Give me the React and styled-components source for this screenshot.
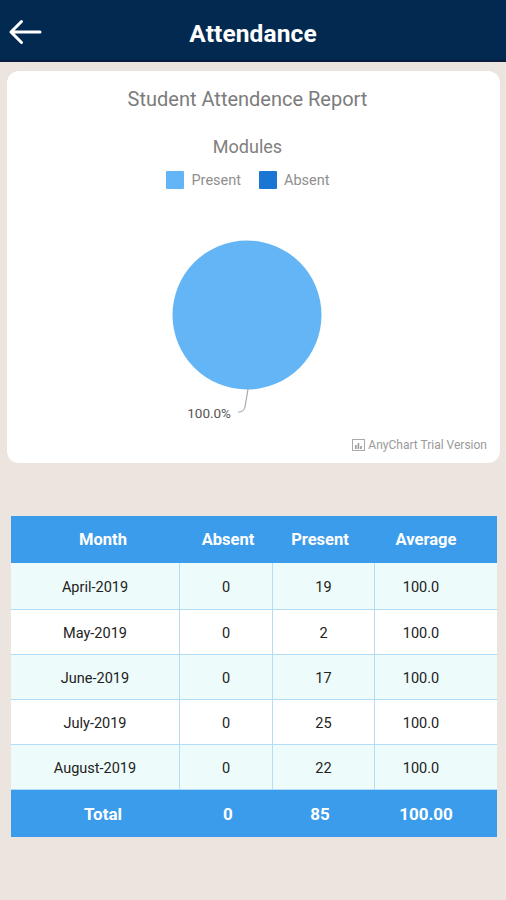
import React from "react";
import styled, { createGlobalStyle } from "styled-components";

const Global = createGlobalStyle`
  html, body { margin: 0; padding: 0; }
  body { background: #ece5df; font-family: Roboto, "Noto Sans", Arial, sans-serif; }
`;

const Page = styled.div`
  width: 506px;
  min-height: 900px;
  background: #ece5df;
  display: flex;
  flex-direction: column;
`;

const TopBar = styled.header`
  height: 62px;
  box-sizing: border-box;
  padding-top: 6px;
  background: #022a50;
  border-bottom: 2px solid #0b1c3e;
  display: flex;
  align-items: center;
  justify-content: center;
  position: relative;
`;

const BackButton = styled.button`
  position: absolute;
  left: 8px;
  top: 18px;
  width: 36px;
  height: 28px;
  padding: 0;
  border: 0;
  background: transparent;
  display: flex;
  align-items: center;
  justify-content: flex-start;
`;

const Title = styled.h1`
  margin: 0;
  color: #fff;
  font-size: 24.5px;
  font-weight: 700;
  letter-spacing: 0.1px;
`;

const Card = styled.section`
  margin: 9px 6px 0 7px;
  height: 392px;
  background: #fff;
  border-radius: 12px;
  display: flex;
  flex-direction: column;
  align-items: center;
  position: relative;
`;

const ChartTitle = styled.div`
  margin: 16px 12px 0 0;
  line-height: 24px;
  font-size: 20px;
  color: #7c7c7c;
`;

const SubTitle = styled.div`
  margin: 25px 12px 0 0;
  line-height: 22px;
  font-size: 18px;
  color: #808080;
`;

const Legend = styled.div`
  margin-top: 13px;
  display: flex;
  align-items: center;
  gap: 18px;
  height: 18px;
  margin-right: 11px;
`;

const LegendItem = styled.div`
  display: flex;
  align-items: center;
  gap: 7px;
  font-size: 14.5px;
  color: #8f8f8f;
`;

const Swatch = styled.span`
  width: 18px;
  height: 18px;
  border-radius: 1px;
  background: ${(p) => p.$color};
`;

const PieSvg = styled.svg`
  display: block;
`;

const Credits = styled.div`
  position: absolute;
  right: 13px;
  bottom: 11px;
  display: flex;
  align-items: center;
  gap: 3px;
  font-size: 12px;
  color: #9a9a9a;
`;

const Table = styled.div`
  margin: 53px 9px 0 11px;
  width: 486px;
  display: flex;
  flex-direction: column;
`;

const BandRow = styled.div`
  display: grid;
  grid-template-columns: 184px 66px 118px 94px;
  padding-right: 24px;
  height: ${(p) => p.$h}px;
  align-items: center;
  background: #3a9ceb;
  color: #fff;
  font-weight: 700;
  font-size: ${(p) => p.$size}px;
  text-align: center;
`;

const DataRow = styled.div`
  display: grid;
  grid-template-columns: 168px 93px 102px 123px;
  height: ${(p) => p.$h}px;
  background: ${(p) => (p.$alt ? "#edfbfb" : "#ffffff")};
  border-bottom: 1px solid #b3ddf6;
  box-sizing: border-box;
`;

const Cell = styled.div`
  display: flex;
  align-items: center;
  justify-content: center;
  padding-top: 2px;
  font-size: 14.5px;
  color: #222;
  border-left: ${(p) => (p.$first ? "0" : "1.5px solid #b3ddf6")};
  padding-right: ${(p) => p.$pr || 0}px;
`;

const rows = [
  ["April-2019", "0", "19", "100.0"],
  ["May-2019", "0", "2", "100.0"],
  ["June-2019", "0", "17", "100.0"],
  ["July-2019", "0", "25", "100.0"],
  ["August-2019", "0", "22", "100.0"],
];

export default function App() {
  return (
    <Page>
      <Global />
      <TopBar>
        <BackButton aria-label="back">
          <svg width="34" height="28" viewBox="0 0 34 28">
            <path d="M3 14 H32 M13.5 3.5 L3 14 L13.5 24.5" fill="none" stroke="#fff" strokeWidth="3" strokeLinecap="round" strokeLinejoin="round" />
          </svg>
        </BackButton>
        <Title>Attendance</Title>
      </TopBar>

      <Card>
        <ChartTitle>Student Attendence Report</ChartTitle>
        <SubTitle>Modules</SubTitle>
        <Legend>
          <LegendItem><Swatch $color="#64b5f6" />Present</LegendItem>
          <LegendItem><Swatch $color="#1976d2" />Absent</LegendItem>
        </Legend>
        <PieSvg width="493" height="240" viewBox="0 0 493 240">
          <circle cx="240" cy="126" r="74.5" fill="#64b5f6" />
          <path d="M241 200 L238 218 Q237 223 231 223" fill="none" stroke="#aaa" strokeWidth="1.2" />
          <text x="224" y="229" textAnchor="end" fontFamily="Roboto, sans-serif" fontSize="13.5" fill="#555">100.0%</text>
        </PieSvg>
        <Credits>
          <svg width="13" height="12" viewBox="0 0 13 12">
            <rect x="0.5" y="0.5" width="12" height="11" fill="none" stroke="#aaa" />
            <rect x="3" y="6" width="1.6" height="4" fill="#999" />
            <rect x="5.6" y="4" width="1.6" height="6" fill="#999" />
            <rect x="8.2" y="7" width="1.6" height="3" fill="#999" />
          </svg>
          AnyChart Trial Version
        </Credits>
      </Card>

      <Table>
        <BandRow $h={47} $size={16.5}>
          <span>Month</span><span>Absent</span><span>Present</span><span>Average</span>
        </BandRow>
        {rows.map((r, i) => (
          <DataRow key={r[0]} $alt={i % 2 === 0} $h={i === 0 ? 47 : 45}>
            <Cell $first>{r[0]}</Cell>
            <Cell>{r[1]}</Cell>
            <Cell>{r[2]}</Cell>
            <Cell $pr={30}>{r[3]}</Cell>
          </DataRow>
        ))}
        <BandRow $h={47} $size={17}>
          <span>Total</span><span>0</span><span>85</span><span>100.00</span>
        </BandRow>
      </Table>
    </Page>
  );
}
